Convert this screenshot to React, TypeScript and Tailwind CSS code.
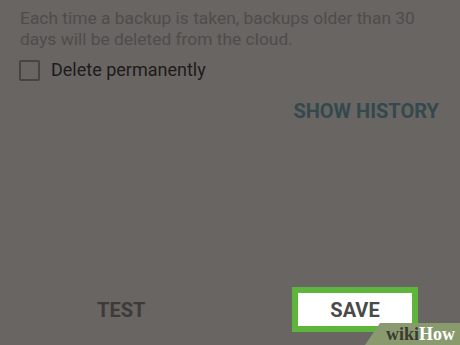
import React from 'react';

const App = () => {
  return (
    <div
      className="relative w-[460px] h-[345px] overflow-hidden bg-[#686563] flex flex-col"
      style={{ fontFamily: 'Roboto, "Liberation Sans", sans-serif' }}
    >
      {/* Description */}
      <p className="pt-[8px] pl-[20px] pr-[20px] text-[17.4px] leading-[21px] text-[#4f4c4a]">
        Each time a backup is taken, backups older than 30 days will be deleted from the cloud.
      </p>

      {/* Checkbox row */}
      <div className="flex items-center gap-[11px] pl-[19px] mt-[9px]">
        <div className="w-[21px] h-[21px] border-2 border-[#474442] rounded-[2px]" />
        <span className="text-[18px] leading-[22px] text-[#1d1c1b]">Delete permanently</span>
      </div>

      {/* Show history */}
      <div className="flex justify-end pr-[21px] mt-[18px]">
        <span className="text-[20px] leading-[24px] font-bold text-[#34494d]">SHOW HISTORY</span>
      </div>

      {/* Bottom actions */}
      <div className="mt-auto flex items-center pb-[13px]">
        <span className="ml-[97px] text-[20px] leading-[24px] font-bold text-[#3c3b3a]">TEST</span>
        <div className="ml-auto mr-[42px] w-[126px] h-[45px] border-[6px] border-[#5db53c] bg-white flex items-center justify-center">
          <span className="text-[20px] leading-[24px] font-bold text-[#4a4a4a]">SAVE</span>
        </div>
      </div>

      {/* wikiHow watermark */}
      <div className="absolute right-0 bottom-0 w-[95px] h-[22px]">
        <svg className="absolute inset-0" width="95" height="22" viewBox="0 0 95 22">
          <polygon points="15,0 95,0 95,22 0,22" fill="#8a9a6f" />
        </svg>
        <div
          className="absolute left-[21px] top-[0px] text-[18px] leading-[22px] font-bold"
          style={{ fontFamily: '"Liberation Serif", "DejaVu Serif", serif' }}
        >
          <span className="text-[#3a3a33]">wiki</span>
          <span className="text-white">How</span>
        </div>
      </div>
    </div>
  );
};

export default App;
